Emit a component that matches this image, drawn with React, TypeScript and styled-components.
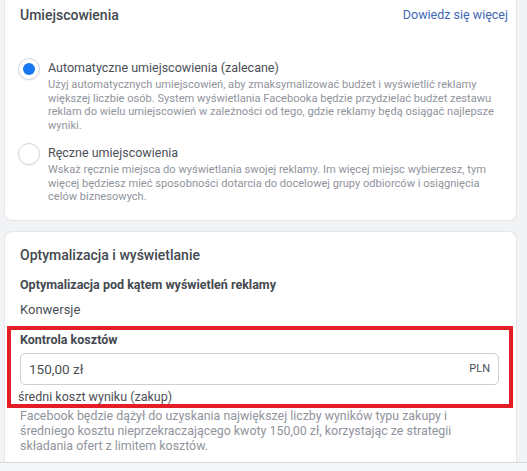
import React, { ReactElement } from 'react'
import styled, { createGlobalStyle } from 'styled-components'

const palette = {
  page: '#f2f3f5',
  card: '#ffffff',
  border: '#dddfe2',
  heading: '#444950',
  text: '#4b4f56',
  muted: '#90949c',
  link: '#4267b2',
  radio: '#1877f2',
  red: '#e41e26',
}

const GlobalStyle = createGlobalStyle`
  html, body {
    margin: 0;
    padding: 0;
    background: ${palette.page};
    font-family: Roboto, 'Noto Sans', Arial, sans-serif;
  }
`

const Page = styled.div`
  display: flex;
  flex-direction: column;
  gap: 10px;
  width: 527px;
  height: 471px;
  overflow: hidden;
  padding: 0 10px 0 4px;
  box-sizing: border-box;
`

const Card = styled.section<{ $cut?: 'top' | 'bottom' }>`
  background: ${palette.card};
  border: 1px solid #e4e6e9;
  border-radius: ${(p) => (p.$cut === 'top' ? '0 0 8px 8px' : p.$cut === 'bottom' ? '8px 8px 0 0' : '8px')};
  ${(p) => (p.$cut === 'top' ? 'border-top: none;' : '')}
  ${(p) => (p.$cut === 'bottom' ? 'border-bottom: none; flex: 1;' : '')}
  display: flex;
  flex-direction: column;
`

const HeaderRow = styled.div`
  display: flex;
  justify-content: space-between;
  align-items: center;
  padding: 0 8px 0 15px;
`

const Title = styled.h2<{ $top: number }>`
  margin: 0;
  padding-top: ${(p) => p.$top}px;
  font-size: 14px;
  line-height: 20px;
  font-weight: 500;
  color: ${palette.heading};
`

const Link = styled.a`
  font-size: 12.5px;
  line-height: 20px;
  color: ${palette.link};
  text-decoration: none;
  padding-top: 5px;
`

const Options = styled.div`
  display: flex;
  flex-direction: column;
  gap: 10px;
  padding: 33px 9px 16px 13px;
`

const OptionRow = styled.label`
  display: grid;
  grid-template-columns: 22px 1fr;
  column-gap: 8px;
`

const Radio = styled.span<{ $checked?: boolean }>`
  width: 22px;
  height: 22px;
  box-sizing: border-box;
  border-radius: 50%;
  border: 1px solid #d3d6db;
  box-shadow: 0 1px 2px rgba(0, 0, 0, 0.06);
  background: #fff;
  display: flex;
  align-items: center;
  justify-content: center;
  &::after {
    content: '';
    display: ${(p) => (p.$checked ? 'block' : 'none')};
    width: 12px;
    height: 12px;
    border-radius: 50%;
    background: ${palette.radio};
  }
`

const OptionLabel = styled.div`
  font-size: 12.5px;
  line-height: 20px;
  color: ${palette.text};
`

const OptionDesc = styled.div`
  font-size: 11.1px;
  line-height: 13.7px;
  color: ${palette.muted};
`

const Section = styled.div`
  display: flex;
  flex-direction: column;
  padding: 0 15px;
`

const FieldTitle = styled.div<{ $top: number }>`
  font-size: 12.5px;
  line-height: 18px;
  font-weight: 700;
  color: ${palette.heading};
  margin-top: ${(p) => p.$top}px;
`

const FieldValue = styled.div`
  font-size: 13px;
  line-height: 18px;
  color: ${palette.text};
  margin-top: 7px;
`

const Highlight = styled.div`
  margin: 7px 3px 0 2px;
  border: 4px solid ${palette.red};
  padding: 1px 10px 0 9px;
  display: flex;
  flex-direction: column;
`

const Input = styled.div`
  margin-top: 4px;
  height: 32px;
  box-sizing: border-box;
  border: 1px solid #ccd0d5;
  border-radius: 5px;
  display: flex;
  align-items: center;
  justify-content: space-between;
  padding: 0 8px 0 8px;
  font-size: 13.5px;
  color: ${palette.text};
`

const Currency = styled.span`
  font-size: 11px;
  color: ${palette.text};
`

const Hint = styled.div`
  font-size: 12.5px;
  line-height: 14px;
  color: ${palette.text};
  margin: 5px 0 0 -2px;
`

const Explain = styled.div`
  font-size: 12.4px;
  line-height: 15px;
  color: ${palette.muted};
  padding: 0 40px 0 15px;
`

const Footer = styled.div`
  margin: -10px -10px 0 -4px;
  height: 8px;
  flex-shrink: 0;
  border-top: 1px solid #d6d8dc;
  background: #f5f6f7;
`

const Placement = ({
  checked,
  label,
  desc,
}: {
  checked?: boolean
  label: string
  desc: string
}): ReactElement => (
  <OptionRow>
    <Radio $checked={checked} />
    <div>
      <OptionLabel>{label}</OptionLabel>
      <OptionDesc>{desc}</OptionDesc>
    </div>
  </OptionRow>
)

const App = (): ReactElement => (
  <>
    <GlobalStyle />
    <Page>
      <Card $cut="top">
        <HeaderRow>
          <Title $top={5}>Umiejscowienia</Title>
          <Link href="#">Dowiedz się więcej</Link>
        </HeaderRow>
        <Options>
          <Placement
            checked
            label="Automatyczne umiejscowienia (zalecane)"
            desc="Użyj automatycznych umiejscowień, aby zmaksymalizować budżet i wyświetlić reklamy większej liczbie osób. System wyświetlania Facebooka będzie przydzielać budżet zestawu reklam do wielu umiejscowień w zależności od tego, gdzie reklamy będą osiągać najlepsze wyniki."
          />
          <Placement
            label="Ręczne umiejscowienia"
            desc="Wskaż ręcznie miejsca do wyświetlania swojej reklamy. Im więcej miejsc wybierzesz, tym więcej będziesz mieć sposobności dotarcia do docelowej grupy odbiorców i osiągnięcia celów biznesowych."
          />
        </Options>
      </Card>
      <Card $cut="bottom">
        <Section>
          <Title $top={13}>Optymalizacja i wyświetlanie</Title>
          <FieldTitle $top={11}>Optymalizacja pod kątem wyświetleń reklamy</FieldTitle>
          <FieldValue>Konwersje</FieldValue>
        </Section>
        <Highlight>
          <FieldTitle $top={0}>Kontrola kosztów</FieldTitle>
          <Input>
            <span>150,00 zł</span>
            <Currency>PLN</Currency>
          </Input>
          <Hint>średni koszt wyniku (zakup)</Hint>
        </Highlight>
        <Explain>
          Facebook będzie dążył do uzyskania największej liczby wyników typu zakupy i średniego
          kosztu nieprzekraczającego kwoty 150,00 zł, korzystając ze strategii składania ofert z
          limitem kosztów.
        </Explain>
      </Card>
      <Footer />
    </Page>
  </>
)

export default App
